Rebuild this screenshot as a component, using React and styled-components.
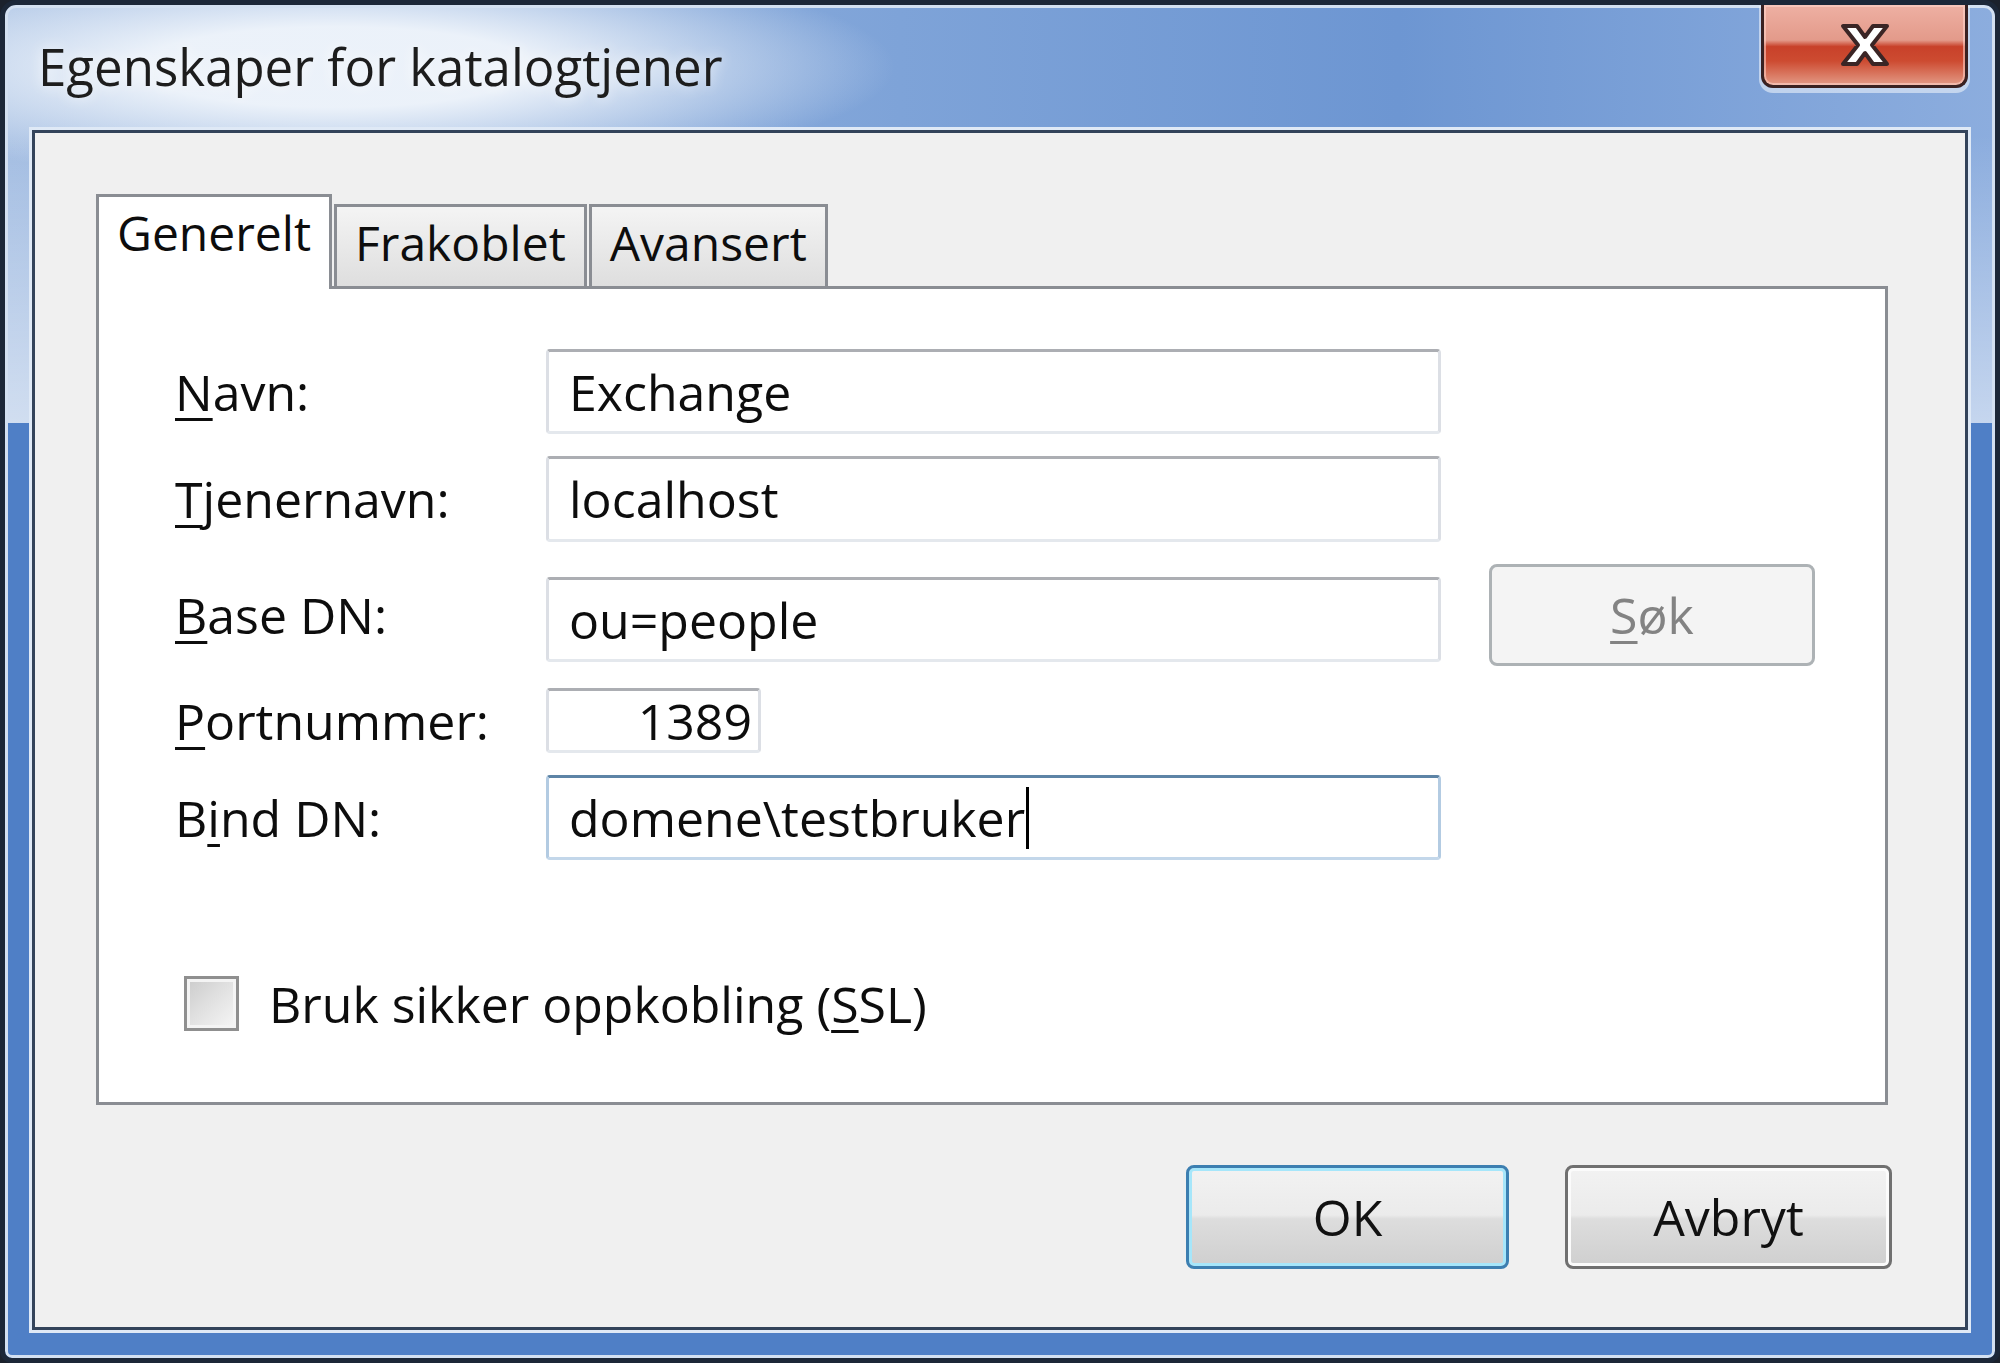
import React from "react";
import styled, { createGlobalStyle } from "styled-components";

const GlobalStyle = createGlobalStyle`
  html, body {
    margin: 0;
    padding: 0;
    background: #1b212c;
  }
  body {
    font-family: "Open Sans", "Noto Sans", sans-serif;
    color: #0d0d0d;
  }
  * {
    box-sizing: border-box;
  }
`;

const Window = styled.div`
  width: 2000px;
  height: 1363px;
  display: flex;
  flex-direction: column;
  border: 5px solid #1c2738;
  border-radius: 16px 16px 12px 12px;
  padding: 0 27px 28px;
  box-shadow: inset 0 0 0 3px #d3e0f1;
  background:
    linear-gradient(180deg, transparent 418px, #4f7fc6 418px),
    linear-gradient(180deg, rgba(255, 255, 255, 0) 130px, rgba(255, 255, 255, 0.5) 418px),
    radial-gradient(ellipse 560px 115px at 330px 62px, rgba(240, 245, 251, 0.95) 35%, rgba(240, 245, 251, 0) 100%),
    linear-gradient(90deg, #a3bde2 0%, #7ea3d8 45%, #6d96d2 70%, #8cadde 100%);
`;

const TitleBar = styled.div`
  height: 125px;
  display: flex;
  justify-content: space-between;
  align-items: flex-start;
`;

const Title = styled.div`
  margin-top: 27px;
  padding-left: 6px;
  font-size: 51px;
  line-height: 68px;
  color: #1d1d1d;
  text-shadow: 0 0 14px rgba(255, 255, 255, 0.9);
`;

const CloseButton = styled.div`
  width: 207px;
  height: 83px;
  display: flex;
  align-items: center;
  justify-content: center;
  border: 3px solid #3a2121;
  border-top: none;
  border-radius: 0 0 12px 12px;
  background: linear-gradient(
    180deg,
    #eeb0a3 0%,
    #e39a8a 44%,
    #c8412a 52%,
    #cd4b31 70%,
    #e39a86 100%
  );
  box-shadow: inset 0 0 0 2px rgba(255, 215, 205, 0.55), 0 3px 0 2px rgba(235, 242, 250, 0.6);
`;

const Client = styled.div`
  flex: 1;
  display: flex;
  flex-direction: column;
  background: #f0f0f0;
  border: 3px solid #33435a;
  box-shadow: 0 0 0 3px #dfe9f6;
  padding: 61px 0 0 61px;
`;

const TabStrip = styled.div`
  display: flex;
  align-items: flex-end;
  gap: 2px;
`;

const Tab = styled.div`
  position: relative;
  z-index: ${(p) => (p.$active ? 2 : 1)};
  height: ${(p) => (p.$active ? "95px" : "82px")};
  margin-bottom: ${(p) => (p.$active ? "-3px" : "0")};
  padding: 6px 18px 0;
  border: 3px solid #8a8d93;
  border-bottom: none;
  background: ${(p) => (p.$active ? "#ffffff" : "linear-gradient(180deg, #f4f4f4 0%, #e9e9e9 50%, #dedede 100%)")};
  font-size: 48px;
  line-height: 60px;
  white-space: nowrap;
`;

const Panel = styled.div`
  width: 1792px;
  height: 819px;
  background: #ffffff;
  border: 3px solid #8a8d93;
  padding: 60px 0 0 76px;
`;

const FormGrid = styled.div`
  display: grid;
  grid-template-columns: 371px 895px auto;
  grid-template-rows: 85px 86px 102px 65px 85px;
  row-gap: 22px;
  align-items: center;
`;

const Label = styled.div`
  grid-column: 1;
  font-size: 50px;
  line-height: 1;
  white-space: nowrap;
`;

const Key = styled.span`
  text-decoration: underline;
  text-decoration-thickness: 3px;
  text-underline-offset: 7px;
`;

const Field = styled.div`
  grid-column: 2;
  width: ${(p) => p.$w || "895px"};
  height: ${(p) => p.$h || "85px"};
  align-self: ${(p) => p.$self || "center"};
  margin-bottom: ${(p) => p.$mb || "0"};
  display: flex;
  align-items: center;
  justify-content: ${(p) => (p.$right ? "flex-end" : "flex-start")};
  padding: ${(p) => (p.$right ? "0 6px 0 0" : "0 0 0 20px")};
  background: #ffffff;
  border: 3px solid;
  border-color: ${(p) =>
    p.$focus ? "#5d84a6 #b3cbe2 #c3d7ea #b3cbe2" : "#acaeb3 #dcdfe5 #e4e8ed #dcdfe5"};
  border-radius: 4px;
  font-size: 50px;
  line-height: 1;
  white-space: nowrap;
`;

const Caret = styled.span`
  display: inline-block;
  width: 3px;
  height: 62px;
  margin-left: 1px;
  background: #000;
`;

const Button = styled.div`
  width: ${(p) => p.$w};
  height: ${(p) => p.$h || "104px"};
  display: flex;
  align-items: center;
  justify-content: center;
  border: 3px solid ${(p) => (p.$default ? "#3c7fb1" : "#707070")};
  border-radius: 8px;
  background: linear-gradient(180deg, #f2f2f2 0%, #ebebeb 48%, #dddddd 52%, #cfcfcf 100%);
  box-shadow: inset 0 0 0 3px ${(p) => (p.$default ? "#a6e6fa" : "#fbfbfb")};
  font-size: 50px;
  line-height: 1;
  color: #111;
`;

const DisabledButton = styled(Button)`
  grid-column: 3;
  margin-left: 48px;
  border-color: #adb2b5;
  background: #f4f4f4;
  box-shadow: none;
  color: #838383;
`;

const CheckRow = styled.div`
  display: flex;
  align-items: center;
  gap: 30px;
  margin: 116px 0 0 9px;
  font-size: 50px;
  line-height: 1;
`;

const CheckBox = styled.div`
  width: 55px;
  height: 55px;
  border: 3px solid #8f8f8f;
  background: linear-gradient(135deg, #cbcbcb 0%, #e4e4e4 55%, #f6f6f6 100%);
  box-shadow: inset 0 0 0 3px #f4f4f4;
`;

const ButtonRow = styled.div`
  display: flex;
  justify-content: flex-end;
  gap: 56px;
  margin-top: 60px;
  padding-right: 73px;
`;

const CloseIcon = () => (
  <svg width="52" height="46" viewBox="0 0 52 46">
    <polygon
      points="4,4 18,4 26,15 34,4 48,4 33,23 48,42 34,42 26,31 18,42 4,42 19,23"
      fill="#ffffff"
      stroke="#3b2525"
      strokeWidth="4"
      strokeLinejoin="round"
    />
  </svg>
);

export default function App() {
  return (
    <>
      <GlobalStyle />
      <Window>
        <TitleBar>
          <Title>Egenskaper for katalogtjener</Title>
          <CloseButton>
            <CloseIcon />
          </CloseButton>
        </TitleBar>
        <Client>
          <TabStrip>
            <Tab $active>Generelt</Tab>
            <Tab>Frakoblet</Tab>
            <Tab>Avansert</Tab>
          </TabStrip>
          <Panel>
            <FormGrid>
              <Label>
                <Key>N</Key>avn:
              </Label>
              <Field>Exchange</Field>

              <Label>
                <Key>T</Key>jenernavn:
              </Label>
              <Field $h="86px">localhost</Field>

              <Label>
                <Key>B</Key>ase DN:
              </Label>
              <Field $self="end" $mb="4px">ou=people</Field>
              <DisabledButton $w="326px" $h="102px">
                <span>
                  <Key>S</Key>øk
                </span>
              </DisabledButton>

              <Label>
                <Key>P</Key>ortnummer:
              </Label>
              <Field $w="215px" $h="65px" $right>
                1389
              </Field>

              <Label>
                B<Key>i</Key>nd DN:
              </Label>
              <Field $focus>
                {"domene\\testbruker"}
                <Caret />
              </Field>
            </FormGrid>
            <CheckRow>
              <CheckBox />
              <span>
                Bruk sikker oppkobling (<Key>S</Key>SL)
              </span>
            </CheckRow>
          </Panel>
          <ButtonRow>
            <Button $w="323px" $default>
              OK
            </Button>
            <Button $w="327px">Avbryt</Button>
          </ButtonRow>
        </Client>
      </Window>
    </>
  );
}
